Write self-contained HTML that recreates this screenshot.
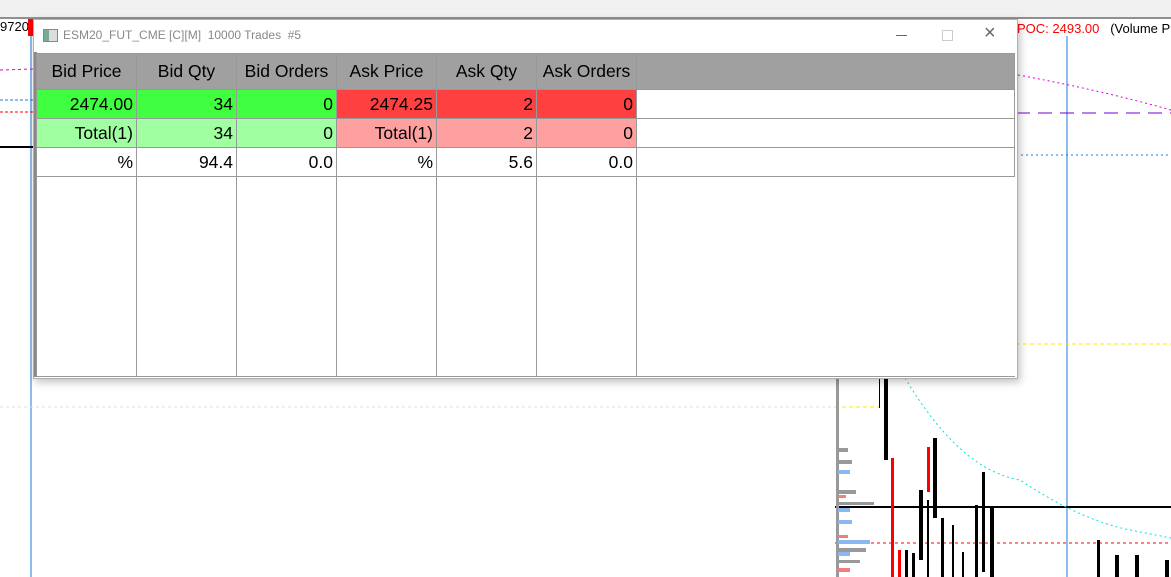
<!DOCTYPE html>
<html><head><style>
body{margin:0;width:1171px;height:577px;overflow:hidden;background:#fff;position:relative;font-family:"Liberation Sans",sans-serif}
.a{position:absolute}
.win{left:33px;top:19px;width:983px;height:358px;background:#fff;border:1px solid #b0b0b0;box-shadow:2px 3px 8px rgba(0,0,0,.25)}
table{border-collapse:collapse;position:absolute;left:2px;top:33px;table-layout:fixed}
td{border:1px solid #999;height:29px;padding:0 3px;font-size:17.5px;text-align:right;color:#000;box-sizing:border-box}
th{background:#a0a0a0;border:1px solid #999;height:36px;box-sizing:border-box;font-weight:normal;font-size:17.5px;color:#000;text-align:center}
.g{background:#40ff40}.lg{background:#a0ffa0}.r{background:#ff4040}.lr{background:#ffa0a0}
</style></head><body>
<div class="a" style="left:0;top:0;width:1171px;height:17px;background:#f0f0f0;border-bottom:2px solid #909090"></div>
<svg class="a" style="left:0;top:0" width="1171" height="577">
<line x1="31" y1="19" x2="31" y2="577" stroke="#1e78d8" stroke-width="1"/>
<line x1="1067" y1="36" x2="1067" y2="577" stroke="#1e78d8"/>
<line x1="0" y1="407" x2="835" y2="407" stroke="#ddd" stroke-dasharray="3,3"/>
<line x1="1016" y1="344" x2="1171" y2="344" stroke="#f0f000" stroke-dasharray="4,3"/>
<line x1="835" y1="407" x2="880" y2="407" stroke="#f0f000" stroke-dasharray="4,3"/>
<line x1="1016" y1="113" x2="1171" y2="113" stroke="#7000d0" stroke-dasharray="14,8"/>
<line x1="1016" y1="155" x2="1171" y2="155" stroke="#1e78d8" stroke-dasharray="2,3"/>
<path d="M1018 75 Q1100 90 1171 110" fill="none" stroke="#e000e0" stroke-dasharray="2,3"/>
<path d="M0 70 L33 69" stroke="#e000e0" stroke-dasharray="3,3"/>
<line x1="0" y1="100" x2="33" y2="100" stroke="#1e78d8" stroke-dasharray="3,2"/>
<line x1="0" y1="112" x2="33" y2="112" stroke="red" stroke-dasharray="3,2"/>
<line x1="0" y1="147" x2="33" y2="147" stroke="#000" stroke-width="2"/>
<line x1="835" y1="507" x2="1171" y2="507" stroke="#000" stroke-width="2"/>
<line x1="835" y1="543" x2="1171" y2="543" stroke="red" stroke-dasharray="3,3"/>
<path d="M905 378 Q960 470 1020 480 Q1080 520 1130 530 L1171 538" fill="none" stroke="#00e0e0" stroke-dasharray="2,3"/>
<rect x="836" y="378" width="3" height="199" fill="#999"/>
<g fill="#999"><rect x="838" y="448" width="10" height="4"/><rect x="838" y="460" width="14" height="4"/><rect x="838" y="490" width="18" height="4"/><rect x="838" y="502" width="36" height="3"/><rect x="838" y="548" width="28" height="4"/><rect x="838" y="560" width="22" height="3"/></g>
<g fill="#8ab8ef"><rect x="838" y="470" width="12" height="4"/><rect x="838" y="508" width="12" height="4"/><rect x="838" y="520" width="14" height="4"/><rect x="838" y="540" width="32" height="4"/><rect x="838" y="552" width="12" height="4"/></g>
<g fill="#f08080"><rect x="838" y="495" width="8" height="3"/><rect x="838" y="535" width="10" height="3"/><rect x="838" y="568" width="12" height="4"/></g>
<g fill="#000"><rect x="884" y="378" width="4" height="82"/><rect x="879" y="378" width="1" height="30"/><rect x="919" y="490" width="4" height="70"/><rect x="933" y="438" width="4" height="80"/><rect x="941" y="518" width="3" height="59"/><rect x="975" y="505" width="3" height="72"/><rect x="982" y="472" width="3" height="100"/><rect x="990" y="508" width="4" height="69"/><rect x="1097" y="540" width="3" height="37"/><rect x="1115" y="555" width="4" height="22"/><rect x="1135" y="555" width="4" height="22"/><rect x="1165" y="560" width="4" height="17"/><rect x="905" y="550" width="3" height="27"/><rect x="912" y="553" width="3" height="24"/><rect x="927" y="500" width="2" height="77"/><rect x="952" y="525" width="2" height="52"/><rect x="962" y="552" width="2" height="25"/></g>
<g fill="red"><rect x="891" y="458" width="3" height="119"/><rect x="898" y="550" width="3" height="27"/><rect x="927" y="447" width="3" height="45"/></g>
</svg>
<div class="a" style="left:0;top:19px;font-size:13px;color:#000">9720</div>
<div class="a" style="left:28px;top:19px;width:6px;height:17px;background:red"></div>
<div class="a" style="left:1017px;top:21px;font-size:13px;color:red;white-space:nowrap">POC: 2493.00 <span style="color:#000">&nbsp;&nbsp;(Volume Pr</span></div>
<div class="a win">
<div class="a" style="left:9px;top:9px;width:13px;height:11px;border:1px solid #888;background:linear-gradient(90deg,#7a9 0 40%,#ddd 40%)"></div>
<div class="a" style="left:29px;top:8px;font-size:12px;color:#888;white-space:pre">ESM20_FUT_CME [C][M]  10000 Trades  #5</div>
<div class="a" style="left:862px;top:15px;width:11px;height:1px;background:#666"></div>
<div class="a" style="left:908px;top:10px;width:9px;height:9px;border:1px solid #ccc"></div>
<div class="a" style="left:950px;top:2px;font-size:20px;color:#666">×</div>
<div class="a" style="left:0;top:32px;width:3px;height:325px;background:#888"></div>
<table>
<colgroup><col style="width:100px"><col style="width:100px"><col style="width:100px"><col style="width:100px"><col style="width:100px"><col style="width:100px"><col style="width:378px"></colgroup>
<tr><th>Bid Price</th><th>Bid Qty</th><th>Bid Orders</th><th>Ask Price</th><th>Ask Qty</th><th>Ask Orders</th><th></th></tr>
<tr><td class="g">2474.00</td><td class="g">34</td><td class="g">0</td><td class="r">2474.25</td><td class="r">2</td><td class="r">0</td><td></td></tr>
<tr><td class="lg">Total(1)</td><td class="lg">34</td><td class="lg">0</td><td class="lr">Total(1)</td><td class="lr">2</td><td class="lr">0</td><td></td></tr>
<tr><td>%</td><td>94.4</td><td>0.0</td><td>%</td><td>5.6</td><td>0.0</td><td></td></tr>
<tr><td style="height:200px"></td><td></td><td></td><td></td><td></td><td></td><td style="border-right:none"></td></tr>
</table>
</div>
</body></html>
